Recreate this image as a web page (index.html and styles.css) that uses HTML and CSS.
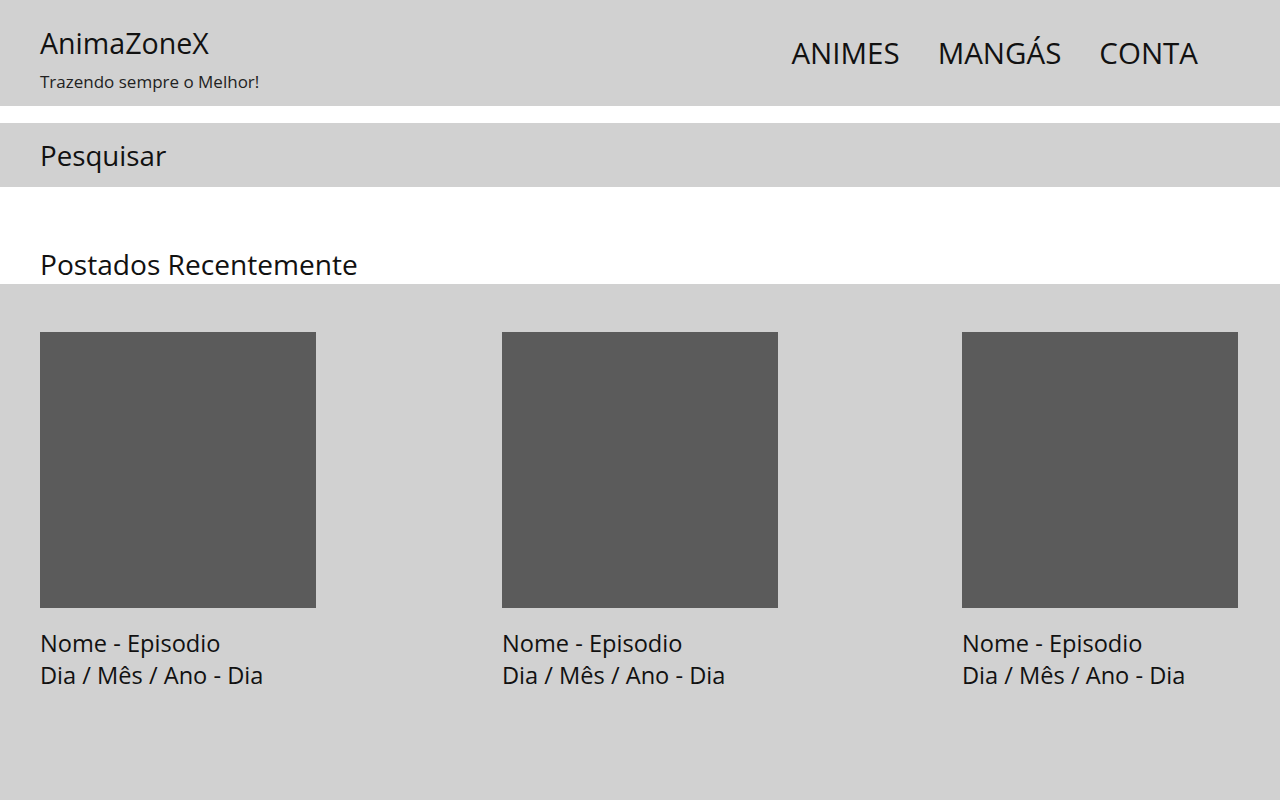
FILE: index.html
```html
<!DOCTYPE html>
<html lang="pt">
<head>
<meta charset="utf-8">
<title>AnimaZoneX</title>
<link rel="stylesheet" href="styles.css">
</head>
<body>
<header class="topbar">
  <div class="brand">
    <div class="brand-name">AnimaZoneX</div>
    <div class="brand-tag">Trazendo sempre o Melhor!</div>
  </div>
  <nav class="nav">
    <a class="nav-link" href="#">ANIMES</a>
    <a class="nav-link" href="#">MANGÁS</a>
    <a class="nav-link" href="#">CONTA</a>
  </nav>
</header>
<div class="search">Pesquisar</div>
<h2 class="section-title">Postados Recentemente</h2>
<main class="recent">
  <div class="card">
    <div class="thumb"></div>
    <div class="card-text">Nome - Episodio</div>
    <div class="card-text">Dia / Mês / Ano - Dia</div>
  </div>
  <div class="card">
    <div class="thumb"></div>
    <div class="card-text">Nome - Episodio</div>
    <div class="card-text">Dia / Mês / Ano - Dia</div>
  </div>
  <div class="card">
    <div class="thumb"></div>
    <div class="card-text">Nome - Episodio</div>
    <div class="card-text">Dia / Mês / Ano - Dia</div>
  </div>
</main>
</body>
</html>
```
FILE: styles.css
```css
* { box-sizing: border-box; }
html, body { margin: 0; padding: 0; }
body {
  font-family: "Open Sans", "Noto Sans", sans-serif;
  color: #111;
  background: #fff;
  height: 800px;
  display: flex;
  flex-direction: column;
}
.topbar {
  height: 106px;
  background: #d1d1d1;
  display: flex;
  justify-content: space-between;
  padding: 23px 82px 0 40px;
}
.brand-name {
  font-size: 28.6px;
  line-height: 40px;
}
.brand-tag {
  font-size: 17px;
  line-height: 24px;
  margin-top: 7px;
  color: #222;
}
.nav {
  display: flex;
  gap: 38px;
  padding-top: 10px;
}
.nav-link {
  font-size: 29.5px;
  line-height: 40px;
  color: #111;
  text-decoration: none;
}
.search {
  margin-top: 17px;
  height: 64px;
  background: #d1d1d1;
  padding: 0 40px;
  font-size: 27.7px;
  line-height: 64px;
}
.section-title {
  margin: 0;
  padding: 57px 40px 0;
  font-weight: normal;
  font-size: 28.1px;
  line-height: 40px;
}
.recent {
  flex: 1;
  background: #d1d1d1;
  display: flex;
  justify-content: space-between;
  align-items: flex-start;
  padding: 48px 42px 0 40px;
}
.card:nth-child(2) {
  margin-left: 2px;
}
.thumb {
  width: 276px;
  height: 276px;
  background: #5b5b5b;
  margin-bottom: 19px;
}
.card-text {
  font-size: 23.6px;
  line-height: 32px;
}
```
